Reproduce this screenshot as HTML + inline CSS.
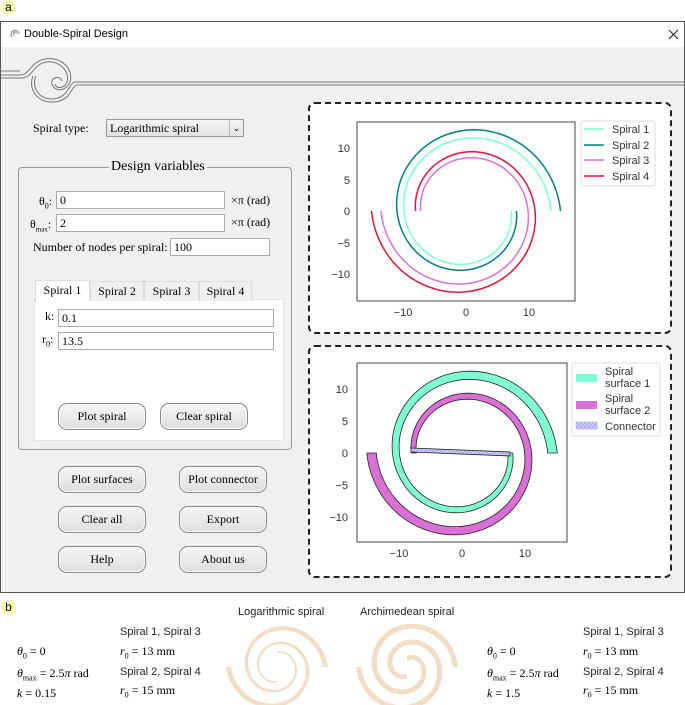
<!DOCTYPE html>
<html><head><meta charset="utf-8"><style>
*{box-sizing:border-box;margin:0;padding:0}
body{width:685px;height:705px;background:#fff;position:relative;overflow:hidden;font-family:"Liberation Serif",serif;font-size:12px;color:#000}
.a{position:absolute}
.lab{position:absolute;width:15px;height:15px;border-radius:50%;background:#fdf7b0;font:12px "Liberation Sans",sans-serif;text-align:center;line-height:15px}
.win{position:absolute;left:0;top:21px;width:685px;height:572px;border:1px solid #555;background:#f0f0f0}
.tb{position:absolute;left:0;top:0;width:683px;height:25px;background:#fff;font:11px "Liberation Sans",sans-serif}
.inp{position:absolute;background:#fff;border:1px solid #aaa;height:18px;padding-left:3px;line-height:16px}
.btn{position:absolute;width:88px;height:27px;border:1px solid #888;border-radius:9px;background:linear-gradient(#f6f6f6,#dedede);text-align:center;line-height:25px;box-shadow:inset 0 0 0 1px #fff}
.tab{position:absolute;top:280px;height:20px;border:1px solid #ddd;border-bottom:none;background:#f0f0f0;text-align:center;line-height:18px}
.eq{position:absolute;font-family:"Liberation Serif",serif;font-size:12px}
.eq i{font-style:italic}
.txt{position:absolute;font:11px "Liberation Sans",sans-serif;color:#222}
</style></head><body>
<div class="lab" style="left:1px;top:0">a</div>
<div class="win">
 <div class="tb">
  <svg class="a" style="left:8px;top:7px" width="12" height="12" viewBox="0 0 12 12"><path d="M6 6a1.5 1.5 0 1 1 1.5 -1.5M3 8a4 4 0 1 1 7 -3" fill="none" stroke="#999" stroke-width="1.2"/></svg>
  <div class="a" style="left:23px;top:6px">Double-Spiral Design</div>
  <svg class="a" style="left:667px;top:7px" width="11" height="11"><path d="M1 1L10 10M10 1L1 10" stroke="#222" stroke-width="1.1"/></svg>
 </div>
 <div class="a" style="left:32px;top:99px">Spiral type:</div>
 <div class="a" style="left:105px;top:97px;width:138px;height:18px;border:1px solid #999;background:linear-gradient(#f4f4f4,#e2e2e2);padding-left:3px;line-height:16px">Logarithmic spiral<span class="a" style="right:0;top:0;width:14px;height:16px;border-left:1px solid #bbb;font-size:9px;text-align:center">⌄</span></div>
 <div class="a" style="left:17px;top:145px;width:274px;height:283px;border:1px solid #999;border-radius:4px;background:#f0f0f0"></div>
 <div class="a" style="left:108px;top:137px;background:#f0f0f0;padding:0 2px;font-size:14px">Design variables</div>
 <div class="a" style="left:38px;top:172px">θ<sub style="font-size:8px">0</sub>:</div>
 <div class="inp" style="left:55px;top:169px;width:169px">0</div>
 <div class="a" style="left:230px;top:171px">×π (rad)</div>
 <div class="a" style="left:29px;top:195px">θ<sub style="font-size:7px">max</sub>:</div>
 <div class="inp" style="left:55px;top:192px;width:169px">2</div>
 <div class="a" style="left:230px;top:193px">×π (rad)</div>
 <div class="a" style="left:32px;top:218px">Number of nodes per spiral:</div>
 <div class="inp" style="left:169px;top:216px;width:100px">100</div>
 <div class="a" style="left:33px;top:277px;width:250px;height:142px;background:#fff;border:1px solid #e4e4e4"></div>
 <div class="tab" style="left:34px;top:258px;width:55px;background:#fff;height:22px">Spiral 1</div>
 <div class="tab" style="left:89px;top:259px;width:54px">Spiral 2</div>
 <div class="tab" style="left:143px;top:259px;width:55px">Spiral 3</div>
 <div class="tab" style="left:198px;top:259px;width:53px">Spiral 4</div>
 <div class="a" style="left:44px;top:287px">k:</div>
 <div class="inp" style="left:57px;top:287px;width:216px">0.1</div>
 <div class="a" style="left:41px;top:310px">r<sub style="font-size:8px">0</sub>:</div>
 <div class="inp" style="left:57px;top:310px;width:216px">13.5</div>
 <div class="btn" style="left:57px;top:381px">Plot spiral</div>
 <div class="btn" style="left:159px;top:381px">Clear spiral</div>
 <div class="btn" style="left:57px;top:444px">Plot surfaces</div>
 <div class="btn" style="left:178px;top:444px">Plot connector</div>
 <div class="btn" style="left:57px;top:484px">Clear all</div>
 <div class="btn" style="left:178px;top:484px">Export</div>
 <div class="btn" style="left:57px;top:524px">Help</div>
 <div class="btn" style="left:178px;top:524px">About us</div>
 <div class="a" style="left:307px;top:80px;width:364px;height:232px;border:2px dashed #222;border-radius:7px;background:#fff"></div>
 <div class="a" style="left:307px;top:323px;width:364px;height:233px;border:2px dashed #222;border-radius:7px;background:#fff"></div>
</div>
<svg id="g" class="a" style="left:0;top:0" width="685" height="705" font-family="Liberation Sans, DejaVu Sans, sans-serif" font-size="11" fill="#333">
 <defs><pattern id="h" width="4" height="4" patternUnits="userSpaceOnUse"><rect width="4" height="4" fill="#ccccff"/><path d="M0 4L4 0" stroke="#8888ee" stroke-width=".6"/></pattern></defs>
 <g fill="none" stroke="#777" stroke-width="1">
  <path d="M1 75H20C30 75 30 62 45 59C62 56 74 70 70 82C66 92 54 92 52 84C50 77 60 75 62 81"/>
  <path d="M1 78H21C33 78 32 65 46 62C60 60 70 72 67 82C64 89 56 89 55 84"/>
  <path d="M1 71H20"/>
  <path d="M685 82H76C68 82 70 98 52 99C38 99 31 86 36 76"/>
  <path d="M685 85H77C71 85 72 102 52 102C36 102 28 88 33 76"/>
 </g>
 <rect x="357" y="122" width="218" height="179" fill="#fff" stroke="#444"/>
 <rect x="357" y="363" width="210" height="179" fill="#fff" stroke="#444"/>
 <g id="p"></g>
 <g text-anchor="middle"><text x="403" y="316">−10</text><text x="466" y="316">0</text><text x="529" y="316">10</text>
 <text x="399" y="557">−10</text><text x="462" y="557">0</text><text x="525" y="557">10</text></g>
 <g text-anchor="end"><text x="350" y="152">10</text><text x="350" y="184">5</text><text x="350" y="215">0</text><text x="350" y="247">−5</text><text x="350" y="278">−10</text>
 <text x="348" y="393">10</text><text x="348" y="425">5</text><text x="348" y="457">0</text><text x="348" y="489">−5</text><text x="348" y="521">−10</text></g>
 <rect x="581" y="121" width="74" height="65" fill="#fff" stroke="#ddd" rx="2"/>
 <g stroke-width="1.5"><line x1="584" y1="129" x2="604" y2="129" stroke="#7fffd4"/><line x1="584" y1="145" x2="604" y2="145" stroke="#008080"/><line x1="584" y1="160" x2="604" y2="160" stroke="#da70d6"/><line x1="584" y1="176" x2="604" y2="176" stroke="#dc143c"/></g>
 <text x="612" y="133">Spiral 1</text><text x="612" y="149">Spiral 2</text><text x="612" y="164">Spiral 3</text><text x="612" y="180">Spiral 4</text>
 <rect x="572" y="363" width="88" height="73" fill="#fff" stroke="#ddd" rx="2"/>
 <rect x="576" y="374" width="21" height="8" fill="#7fffd4"/><rect x="576" y="401" width="21" height="8" fill="#da70d6"/><rect x="576" y="422" width="21" height="7" fill="url(#h)" stroke="#99f" stroke-width=".5"/>
 <text x="605" y="375">Spiral</text><text x="605" y="387">surface 1</text><text x="605" y="402">Spiral</text><text x="605" y="414">surface 2</text><text x="605" y="430">Connector</text>
 <g id="b"></g>
</svg>
<div class="lab" style="left:1px;top:600px">b</div>
<div class="txt" style="left:238px;top:606px">Logarithmic spiral</div>
<div class="txt" style="left:360px;top:606px">Archimedean spiral</div>
<div class="eq" style="left:17px;top:644px"><i>θ</i><sub style="font-size:8px">0</sub> = 0</div>
<div class="eq" style="left:17px;top:666px"><i>θ</i><sub style="font-size:8px">max</sub> = 2.5<i>π</i> rad</div>
<div class="eq" style="left:17px;top:686px"><i>k</i> = 0.15</div>
<div class="txt" style="left:120px;top:626px">Spiral 1, Spiral 3</div>
<div class="eq" style="left:120px;top:644px"><i>r</i><sub style="font-size:8px">0</sub> = 13 mm</div>
<div class="txt" style="left:120px;top:666px">Spiral 2, Spiral 4</div>
<div class="eq" style="left:120px;top:683px"><i>r</i><sub style="font-size:8px">0</sub> = 15 mm</div>
<div class="eq" style="left:487px;top:644px"><i>θ</i><sub style="font-size:8px">0</sub> = 0</div>
<div class="eq" style="left:487px;top:666px"><i>θ</i><sub style="font-size:8px">max</sub> = 2.5<i>π</i> rad</div>
<div class="eq" style="left:487px;top:686px"><i>k</i> = 1.5</div>
<div class="txt" style="left:583px;top:626px">Spiral 1, Spiral 3</div>
<div class="eq" style="left:583px;top:644px"><i>r</i><sub style="font-size:8px">0</sub> = 13 mm</div>
<div class="txt" style="left:583px;top:666px">Spiral 2, Spiral 4</div>
<div class="eq" style="left:583px;top:683px"><i>r</i><sub style="font-size:8px">0</sub> = 15 mm</div>
<script>
function pts(r0,k,tm,flip,sc,cx,cy,arch,off){off=off||0;var a=[];for(var i=0;i<=120;i++){var t=tm*i/120;var r=arch?r0+k*(t-tm):r0*Math.exp(k*(t-tm));var x=r*Math.cos(t-off),y=-r*Math.sin(t-off);if(flip){x=-x;y=-y;}a.push([cx+x*sc,cy-y*sc]);}return a;}
function d(a){return 'M'+a.map(function(p){return p[0].toFixed(1)+' '+p[1].toFixed(1)}).join('L');}
var ns='http://www.w3.org/2000/svg';
function add(g,attrs){var e=document.createElementNS(ns,'path');for(var k in attrs)e.setAttribute(k,attrs[k]);document.getElementById(g).appendChild(e);}
var P=2*Math.PI,s=6.3;
add('p',{d:d(pts(13.5,.1,P,0,s,466,211)),stroke:'#7fffd4',fill:'none','stroke-width':1.5});
add('p',{d:d(pts(15,.1,P,0,s,466,211)),stroke:'#008080',fill:'none','stroke-width':1.5});
add('p',{d:d(pts(13.5,.1,P,1,s,466,211)),stroke:'#da70d6',fill:'none','stroke-width':1.5});
add('p',{d:d(pts(15,.1,P,1,s,466,211)),stroke:'#dc143c',fill:'none','stroke-width':1.5});
function band(g,r1,r2,k,tm,flip,sc,cx,cy,fill,st,arch,off){var a=pts(r1,k,tm,flip,sc,cx,cy,arch,off),b=pts(r2,k,tm,flip,sc,cx,cy,arch,off).reverse();add(g,{d:d(a.concat(b))+'Z',fill:fill,stroke:st,'stroke-width':0.8});}
band('p',13.5,15,.1,P,0,6.35,462,453,'#7fffd4','#222');
band('p',13.5,15,.1,P,1,6.35,462,453,'#da70d6','#222');
add('p',{d:'M411 448L510 452L510 456L411 452Z',fill:'url(#h)',stroke:'#222','stroke-width':.8});
var T=2.5*Math.PI,O=T-2*Math.PI;
band('b',13.5,15,.15,T,0,3.4,277,667,'#f2dcc4','none',0,O);
band('b',13.5,15,.15,T,1,3.4,277,667,'#f2dcc4','none',0,O);
band('b',13.5,15,1.5,T,0,3.4,407,667,'#f2dcc4','none',1,O);
band('b',13.5,15,1.5,T,1,3.4,407,667,'#f2dcc4','none',1,O);
</script>
</body></html>
